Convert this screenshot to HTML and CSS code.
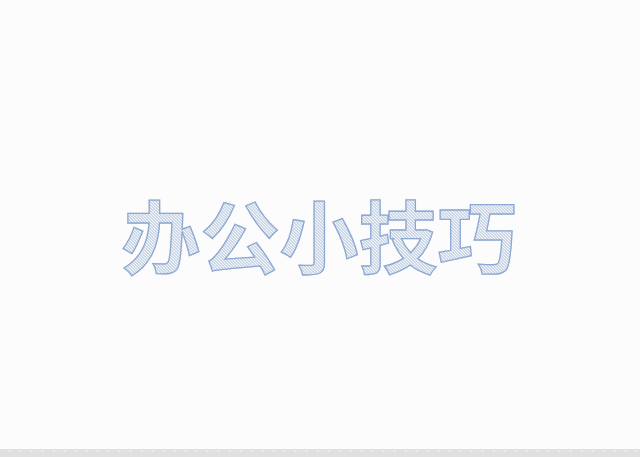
FILE: index.html
```html
<!DOCTYPE html>
<html lang="zh">
<head>
<meta charset="utf-8">
<title>办公小技巧</title>
<link rel="stylesheet" href="styles.css">
</head>
<body>
<main class="stage">
  <h1 class="title">办公小技巧</h1>
</main>
<div class="strip"></div>
</body>
</html>
```
FILE: styles.css
```css
html, body {
  margin: 0;
  height: 100%;
  overflow: hidden;
  background: #fcfcfc;
}
body {
  display: flex;
  flex-direction: column;
  height: 457px;
}
.stage {
  flex: 1;
  display: flex;
  justify-content: center;
  padding-top: 186px;
  box-sizing: border-box;
}
.title {
  margin: 0 2px 0 0;
  height: 96px;
  font-family: "Noto Sans CJK SC", sans-serif;
  font-size: 79px;
  font-weight: 600;
  line-height: 96px;
  white-space: nowrap;
  color: transparent;
  -webkit-text-stroke: 1.3px #8ea9d1;
  background-image: repeating-linear-gradient(45deg, #ccd7e8 0, #ccd7e8 1.06px, #f7f8fb 1.06px, #f7f8fb 2.121px);
  -webkit-background-clip: text;
  background-clip: text;
}
.strip {
  height: 8px;
  background-color: #e0e0e0;
  background-image: radial-gradient(circle, #e8f0f6 0, #e8f0f6 1px, transparent 1.2px);
  background-size: 11px 4px;
  background-position: 4px 0;
  background-repeat: repeat-x;
}
```
